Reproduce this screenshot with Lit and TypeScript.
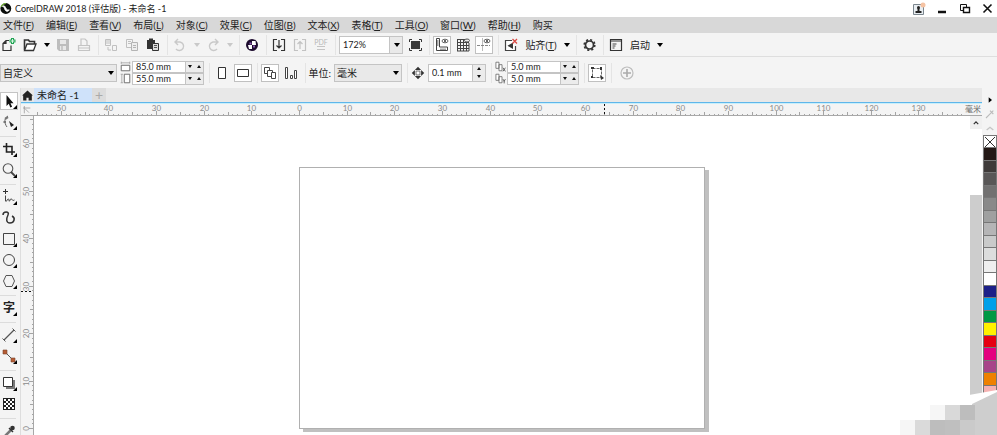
import { LitElement, html, svg, css, nothing } from "lit";
import { customElement, property } from "lit/decorators.js";

/* ---------- icons, drawn on an 18 x 18 grid ---------- */
const icons: Record<string, unknown> = {
  fresh: svg`<path d="M9 4.500H6L3 7.500v7h8v-5M6 4.500v3H3" fill="none" stroke="#333" stroke-width="1.2"/><path d="M12.500 2v6M9.500 5h6" stroke="#22a455" stroke-width="3"/><path d="M12.500 3v4M10.500 5h4" stroke="#d8f5e2" stroke-width="1"/>`,
  open: svg`<path d="M3.500 14V4h4l1 1.500h5V8" fill="none" stroke="#333" stroke-width="1.600"/><path d="M3.500 14.500 6 8h9l-2.500 6.500z" fill="#fff" stroke="#333" stroke-width="1.300"/>`,
  save: svg`<path d="M3 3h12v12H5l-2-2z" fill="#bdbdbd"/><path d="M6 4h6v4H6zM6 10h6v4H6z" fill="#e8e8e8"/><path d="M8 10v4" stroke="#aaa"/>`,
  print: svg`<path d="M6 9V3h4l2 2v4M3.500 14.500v-5h11v5zM3 12h12" fill="none" stroke="#c4c4c4" stroke-width="1.200"/>`,
  cut: svg`<path d="M3.500 3.500h5v6h-5zM4 5h4M4 7h4M10.500 9.500h4v5h-4zM6 11v3h3" fill="none" stroke="#c0c0c0"/>`,
  copy: svg`<path d="M3.500 3.500h6v8h-6zM5 5.500h3M5 7.500h3" fill="none" stroke="#c0c0c0"/><path d="M8.500 6.500h6v8h-6zM10 9.500h3M10 11.500h3" fill="#eee" stroke="#b4b4b4"/>`,
  paste: svg`<path d="M3 4h2V2.500h4V4h2v9H3z" fill="#333"/><path d="M8.500 7.500h6v7h-6z" fill="#ddd" stroke="#333"/><path d="M10 9.500h3M10 11.500h3" stroke="#555"/>`,
  undo: svg`<path d="M7 3 4 6l3 3M4 6h5a4.300 4.300 0 1 1-4 7" fill="none" stroke="#c9c9c9" stroke-width="1.400"/>`,
  redo: svg`<path d="M11 3l3 3-3 3M14 6H9a4.300 4.300 0 1 0 4 7" fill="none" stroke="#c9c9c9" stroke-width="1.400"/>`,
  connect: svg`<circle cx="9" cy="9" r="6" fill="#1d0b2e"/><path d="M9 5h3.500L13 9H9zM5 9h4v4H6z" fill="#fff"/><path d="M6.500 6.500h2v2h-2zM10 9.500h2v2h-2z" fill="#8a5cb0"/>`,
  load: svg`<path d="M7 3.500H3.500v11H7M11 3.500h3.500v11H11M9 4v8M6.500 9.500 9 12l2.500-2.500" fill="none" stroke="#333" stroke-width="1.200"/>`,
  send: svg`<path d="M7 3.500H3.500v11H7M11 3.500h3.500v11H11M9 13V5.500M6.500 8 9 5.500 11.500 8" fill="none" stroke="#c2c2c2" stroke-width="1.200"/>`,
  full: svg`<path d="M5 5h9v8H5z" fill="#3a3a3a"/><path d="M3.500 6V3.500H6M13 3.500h2.500V6M15.500 12v2.500H13M6 14.500H3.500V12" fill="none" stroke="#333"/>`,
  rulers: svg`<path d="M3.500 2.500h3v8.500h8v3.500h-11zM4 5h1.500M4 7h1.500M4 9h1.500M8 14v-1.500M10 14v-1.500M12 14v-1.500" fill="none" stroke="#444"/><ellipse cx="12" cy="5" rx="3" ry="1.800" fill="none" stroke="#666"/><circle cx="12" cy="5" r="1" fill="#333"/>`,
  grid: svg`<path d="M3.500 3v12M6.500 3v12M9.500 3v12M12.500 3v12M15 7v8M3 3.500h8M3 6.500h12M3 9.500h12M3 12.500h12M3 15h12" fill="none" stroke="#444"/><ellipse cx="13" cy="4.500" rx="2.500" ry="1.500" fill="#eee" stroke="#555"/>`,
  guides: svg`<path d="M7.500 2v13" stroke="#bbb"/><path d="M2 9.500h13" stroke="#888" stroke-dasharray="3 1"/><ellipse cx="12" cy="5" rx="3" ry="1.800" fill="none" stroke="#666"/><circle cx="12" cy="5" r="1" fill="#333"/>`,
  nosnap: svg`<path d="M10 4.500H3.500v10h10V10" fill="#fff" stroke="#444" stroke-width="1.200"/><path d="M11 6.500v6.500L5.500 9.700z" fill="#333"/><path d="M10.500 3l4.500 4.500M15 3l-4.500 4.500" stroke="#d94a44" stroke-width="1.300"/>`,
  gear: svg`<circle cx="9.500" cy="9" r="4" fill="none" stroke="#333" stroke-width="1.700"/><circle cx="9.500" cy="9" r="5.300" fill="none" stroke="#333" stroke-width="1.600" stroke-dasharray="2.080 2.080"/>`,
  launch: svg`<path d="M3.500 3.500h11v11h-11zM3.500 5h11" fill="none" stroke="#333" stroke-width="1.200"/><path d="M5.500 8h4M5.500 10h3M5.500 12h2" stroke="#444"/>`,
  portrait: svg`<path d="M5.500 3.500h7v11h-7z" fill="#fff" stroke="#333"/>`,
  landscape: svg`<path d="M3.500 5.500h11v7h-11z" fill="#fff" stroke="#333"/>`,
  pages: svg`<path d="M3.500 3.500h5v6h-5z" fill="#fff" stroke="#444"/><path d="M6.500 6.500h5v6h-5z" fill="#fff" stroke="#444"/><path d="M10.500 8.500h4v6h-4z" fill="#fff" stroke="#444"/>`,
  current: svg`<path d="M3.500 3.500h2v11h-2zM12.500 6.500h2v8h-2zM8.500 11.500h2v3h-2z" fill="#fff" stroke="#444"/>`,
  nudge: svg`<path d="M9 1l4 4H5zM9 17l4-4H5zM1 9l4-4v8zM17 9l-4-4v8z" fill="#333"/><path d="M6.500 6.500h5v5h-5z" fill="#fff" stroke="#555"/>`,
  bounds: svg`<path d="M4.500 4.500h9v9h-9z" fill="none" stroke="#666" stroke-dasharray="3 1"/><path d="M3 3h3v2H3zM12 3h2v3h-2zM3 12h2v2H3z" fill="#333"/><path d="M12 11l4 3-3 2z" fill="#333"/>`,
  plus: svg`<circle cx="9" cy="9" r="6" fill="none" stroke="#bdbdbd" stroke-width="1.200"/><path d="M9 5v8M5 9h8" stroke="#aaa" stroke-width="1.600"/>`,
  pick: svg`<path d="M6.500 3v11l2.300-2.200 1.500 3.700 1.800-.8-1.600-3.500h3z" fill="#111"/>`,
  shape: svg`<path d="M8 3C4 5 4 10 7 14" fill="none" stroke="#666"/><path d="M4.500 5l3-2 1 2-3 2zM3.500 8h2.500v2H3.500z" fill="#777"/><path d="M9 8l5 4-3 2z" fill="#222"/>`,
  crop: svg`<path d="M6.500 3v9H15M3 6.500h9V15" fill="none" stroke="#222" stroke-width="1.600"/>`,
  zoom: svg`<circle cx="8" cy="7.500" r="4.800" fill="none" stroke="#555" stroke-width="1.100"/><path d="M11 11l4 4" stroke="#444" stroke-width="1.800"/>`,
  freehand: svg`<path d="M5.500 1v5M3 3.500h5" stroke="#333"/><path d="M5.500 7.500V13c1 2 2-3 3-2s0 3 1 2 1-3 2-2 1 2 3 1" fill="none" stroke="#444"/>`,
  artistic: svg`<path d="M3 6c0-4 7-4 5 0s-2 8 2 8 6-5 2-7" fill="none" stroke="#333" stroke-width="1.500"/>`,
  rect: svg`<path d="M3.500 3.500h11v11h-11z" fill="none" stroke="#444"/>`,
  ellipse: svg`<circle cx="9" cy="9" r="5.500" fill="none" stroke="#444"/>`,
  polygon: svg`<path d="M6 3.500h6L14.500 9 12 14.500H6L3.500 9z" fill="none" stroke="#555"/>`,
  line: svg`<path d="M4 14L14 4" stroke="#555" stroke-width="1.200"/><path d="M2.500 12.500l3 3M12.500 2.500l3 3" stroke="#555"/>`,
  connector: svg`<path d="M5 5l9 9" stroke="#555"/><path d="M3 3h4v4H3zM11 11h4v4h-4z" fill="#b55c34" stroke="#7a452c" stroke-width=".6"/>`,
  shadow: svg`<path d="M6 6h9v9H6z" fill="#777"/><path d="M3.500 3.500h9v9h-9z" fill="#fff" stroke="#333"/>`,
  checker: svg`<path d="M3 3h12v12H3z" fill="#222"/>${[0, 1, 2, 3, 4].map((r) =>
    [0, 1, 2].map((c) => (r % 2 && c === 2) ? nothing : svg`<path d=${`M${4 + c * 4 + (r % 2) * 2} ${4 + r * 2}h2v2h-2z`} fill="#fff"/>`))}`,
  dropper: svg`<path d="M4 15l7-7" stroke="#777" stroke-width="2.500"/><path d="M9 6l4 4" stroke="#333" stroke-width="1.500"/><circle cx="12.500" cy="6" r="2.300" fill="#333"/>`,
  user: svg`<path d="M3.500 4.500h10v10h-10z" fill="#e9eef2" stroke="#7b868e"/><circle cx="8.500" cy="7.500" r="1.500" fill="#222"/><path d="M7.500 8h2v3h2v2h-6v-2h2z" fill="#222"/><circle cx="13" cy="5" r="2.500" fill="#f5c3a3"/>`,
  minimize: svg`<path d="M5 12h8" stroke="#111" stroke-width="2.500"/>`,
  restore: svg`<path d="M4.500 4.500h6v6h-6z" fill="none" stroke="#111"/><path d="M7.500 7.500h6v5h-6z" fill="#fff" stroke="#111" stroke-width="1.400"/>`,
  close: svg`<path d="M4.500 4.500l8 8M12.500 4.500l-8 8" stroke="#111" stroke-width="1.600"/>`,
  logo: svg`<circle cx="7" cy="9" r="6.500" fill="#0c0f0c"/><path d="M1.500 7A6.500 6.500 0 0 1 7 3" stroke="#7ec242" stroke-width="1.500" fill="none"/><path d="M3 6.500c2-2 3 0 4 2s2 3 4 2c-1 3-4 2-5 0s-1-4-3-4z" fill="#fff" stroke="#fff"/>`,
  home: svg`<path d="M9 2L1.500 9H3v7h4.500v-4h3v4H15V9h1.500z" fill="#222"/>`,
  origin: svg`<path d="M5 3v11M3 6h11M6 7l6 6" stroke="#8c8c8c" fill="none"/>`,
  wide: svg`<path d="M2 1v4M16 1v4M2 3h14" stroke="#888" fill="none"/><path d="M2 7h14v9H2z" fill="#fff" stroke="#666" stroke-width="1.500"/>`,
  tall: svg`<path d="M1 2h4M1 16h4M3 2v14" stroke="#888" fill="none"/><path d="M7 2h9v14H7z" fill="#fff" stroke="#666" stroke-width="1.500"/>`,
  dup: svg`<path d="M1.500 2h5v10h-5zM6.500 6h5v10h-5z" fill="#fff" stroke="#666" stroke-width="1.300"/>`,
  dupx: svg`<path d="M13 11l4 6M17 11l-4 6" stroke="#444" stroke-width="1.300"/>`,
  dupy: svg`<path d="M13 10l2 3.500 2-3.500M15 13v4" fill="none" stroke="#444" stroke-width="1.300"/>`,
  up: svg`<path d="M5 11l4-4 4 4" fill="none" stroke="#333" stroke-width="2.200"/>`,
  flyout: svg`<path d="M7 5v8l5-4z" fill="#000"/>`,
  pen: svg`<path d="M3 15l8-8M9 4l5 5M11 7l3-3" stroke="#bbb" stroke-width="1.600"/>`,
  faint: svg`<path d="M4 12l5-4 5 4" fill="none" stroke="#c4c4c4" stroke-width="2"/>`,
};

const icon = (name: string, size = 18, second = "") =>
  html`<svg width=${size} height=${size} viewBox="0 0 18 18" aria-hidden="true">${icons[name]}${second ? icons[second] : nothing}</svg>`;

const base = css`
  * { box-sizing: border-box; }
  svg { display: block; flex: none; }
  button {
    font: inherit; color: inherit; background: none; border: 0; padding: 0; margin: 0;
    display: flex; align-items: center; justify-content: center; flex: none;
  }
`;

const bar = css`
  :host { display: flex; align-items: center; gap: 3px; white-space: nowrap; }
  .tool { width: 18px; height: 18px; }
  .on { background: #fff; box-shadow: inset 0 0 0 1px #c0c0c0; }
  .sep { width: 3px; height: 20px; flex: none; border-right: 1px solid #e4e4e4; }
  .drop { width: 9px; height: 18px; }
  .drop::before, .arrow {
    content: ""; border: 3px solid transparent; border-top: 4px solid #000; border-bottom: 0;
  }
  .faint::before { border-top-color: #c9c9c9; }
  .combo { display: grid; align-items: center; flex: none; }
  .combo > * { grid-area: 1 / 1; }
  .combo .arrow { justify-self: end; margin-right: 3px; pointer-events: none; }
  select, input {
    font: inherit; color: #222; min-width: 0; border: 1px solid #c4c4c4; border-radius: 0;
    background: #fff; padding: 0 3px; margin: 0; outline: 0; appearance: none;
  }
  input { font-size: 9px; }
  select { width: 100%; height: 18px; background: #e9e9e9; padding: 0 2px; }
  .text { height: 18px; color: #222; }
`;

@customElement("standard-bar")
class StandardBar extends LitElement {
  static styles = [base, bar, css`
    .zoom { width: 64px; }
    .zoom select { background: linear-gradient(to left, #e9e9e9 12px, #c4c4c4 12px 13px, #fff 13px); padding: 0 3px; font-size: 9px; }
    .snap { width: 36px; }
    .launch { width: 24px; }
    .pdf { font-size: 7px; color: #b8b8b8; flex-direction: column; line-height: 7px; }
    .lines { width: 8px; height: 4px; border: solid #c4c4c4; border-width: 1px 0; }
  `];
  private b(name: string, label: string, on = false) {
    return html`<button class="tool ${on ? "on" : ""}" aria-label=${label}>${icon(name)}</button>`;
  }
  private sep = () => html`<span class="sep"></span>`;
  private drop = (faint = false) => html`<button class="drop ${faint ? "faint" : ""}" aria-label="更多"></button>`;
  render() {
    return html`
      ${this.b("fresh", "新建")}${this.b("open", "打开")}${this.drop()}${this.b("save", "保存")}${this.b("print", "打印")}
      ${this.sep()}${this.b("cut", "剪切")}${this.b("copy", "复制")}${this.b("paste", "粘贴")}
      ${this.sep()}${this.b("undo", "撤消")}${this.drop(true)}${this.b("redo", "重做")}${this.drop(true)}
      ${this.sep()}${this.b("connect", "搜索内容")}
      ${this.sep()}${this.b("load", "导入")}${this.b("send", "导出")}
      <button class="tool pdf" aria-label="发布为 PDF">PDF<span class="lines"></span></button>
      ${this.sep()}
      <span class="combo zoom"><select aria-label="缩放级别"><option>172%</option></select><span class="arrow"></span></span>
      ${this.b("full", "全屏预览")}
      ${this.sep()}${this.b("rulers", "显示标尺", true)}${this.b("grid", "显示网格")}${this.b("guides", "显示辅助线", true)}
      ${this.sep()}${this.b("nosnap", "关闭贴齐")}<button class="text snap">贴齐(<u>T</u>)</button>${this.drop()}
      ${this.sep()}${this.b("gear", "选项")}
      ${this.sep()}${this.b("launch", "应用程序启动器")}<button class="text launch">启动</button>${this.drop()}`;
  }
}

@customElement("property-bar")
class PropertyBar extends LitElement {
  static styles = [base, bar, css`
    .preset { width: 117px; }
    .units { width: 68px; }
    .label { width: 22px; display: flex; justify-content: flex-end; }
    .pair { display: grid; grid-template-columns: 12px 72px; width: 84px; align-items: center; flex: none; }
    .field { display: flex; height: 12px; }
    .field input { flex: 1; height: 12px; line-height: 10px; }
    .spin { display: flex; width: 18px; align-items: center; justify-content: space-around; background: #ececec; border: 1px solid #c4c4c4; border-left: 0; }
    .down, .upper { width: 5px; height: 5px; }
    .down::before, .upper::before { content: ""; border: 2px solid transparent; border-top: 3px solid #111; border-bottom: 0; }
    .upper::before { border-top: 0; border-bottom: 3px solid #111; }
    .nudge { width: 58px; height: 18px; }
    .nudge input { height: 18px; }
    .nudge .spin { width: 13px; flex-direction: column-reverse; }
    .add { width: 24px; }
  `];
  private b(name: string, label: string, on = false) {
    return html`<button class="tool ${on ? "on" : ""}" aria-label=${label}>${icon(name)}</button>`;
  }
  private sep = () => html`<span class="sep"></span>`;
  private field(label: string, value: string, extra = "") {
    return html`<span class="field ${extra}"><input aria-label=${label} .value=${value}>
      <span class="spin"><button class="down" aria-label="减少"></button><button class="upper" aria-label="增加"></button></span></span>`;
  }
  render() {
    return html`
      <span class="combo preset"><select aria-label="页面大小"><option>自定义</option></select><span class="arrow"></span></span>
      <span class="pair">
        ${icon("wide", 11)}${this.field("页面宽度", "85.0 mm")}
        ${icon("tall", 11)}${this.field("页面高度", "55.0 mm")}
      </span>
      ${this.sep()}${this.b("portrait", "纵向")}${this.b("landscape", "横向", true)}
      ${this.sep()}${this.b("pages", "所有页面", true)}${this.b("current", "当前页面")}
      ${this.sep()}<label class="label" for="units">单位:</label>
      <span class="combo units"><select id="units"><option>毫米</option></select><span class="arrow"></span></span>
      ${this.sep()}${icon("nudge", 14)}${this.field("微调距离", "0.1 mm", "nudge")}
      ${this.sep()}
      <span class="pair">
        ${icon("dup", 11, "dupx")}${this.field("再制距离 X", "5.0 mm")}
        ${icon("dup", 11, "dupy")}${this.field("再制距离 Y", "5.0 mm")}
      </span>
      ${this.sep()}${this.b("bounds", "将对象视为已填充", true)}
      ${this.sep()}<button class="add" aria-label="自定义">${icon("plus")}</button>`;
  }
}

@customElement("tool-box")
class ToolBox extends LitElement {
  static styles = [base, css`
    :host { display: flex; flex-direction: column; gap: 3px; padding-top: 4px; overflow: hidden; }
    button { width: 18px; height: 18px; position: relative; }
    .on { background: #fff; box-shadow: inset 0 0 0 1px #c4c4c4; }
    .more::after {
      content: ""; position: absolute; right: 1px; bottom: 1px;
      border: 2px solid transparent; border-right-color: #000; border-bottom-color: #000;
    }
    .sep { height: 3px; width: 16px; flex: none; border-bottom: 1px solid #dcdcdc; }
    .glyph { font-size: 12px; font-weight: 700; }
  `];
  private tools: [string, string][] = [
    ["pick", "选择"], ["shape", "形状"], ["", ""], ["crop", "裁剪"], ["zoom", "缩放"], ["", ""],
    ["freehand", "手绘"], ["artistic", "艺术笔"], ["rect", "矩形"], ["ellipse", "椭圆形"], ["polygon", "多边形"], ["", ""],
    ["text", "文本"], ["", ""], ["line", "平行度量"], ["connector", "直线连接器"], ["", ""],
    ["shadow", "阴影"], ["checker", "透明度"], ["", ""], ["dropper", "颜色滴管"],
  ];
  render() {
    return this.tools.map(([name, label], i) => !name
      ? html`<span class="sep"></span>`
      : html`<button class="${i === 0 ? "on" : ""} ${["artistic", "checker"].includes(name) ? "" : "more"}" aria-label=${label}>
          ${name === "text" ? html`<span class="glyph">字</span>` : icon(name)}</button>`);
  }
}

/* A ruler strip: \`origin\` is where zero falls, \`step\` the pixels per ten units. */
@customElement("ruler-strip")
class RulerStrip extends LitElement {
  @property({ type: Boolean }) vertical = false;
  @property({ type: Number }) origin = 0;
  @property({ type: Number }) step = 47;
  @property({ type: Number }) from = 0;
  @property({ type: Number }) to = 100;
  @property({ type: Number }) cursor = 0;
  static styles = css`
    :host { display: block; overflow: hidden; min-width: 0; min-height: 0; }
    svg { display: block; width: 100%; height: 100%; }
    text { font-size: 8px; fill: #8a8a8a; text-anchor: middle; }
  `;
  render() {
    const marks = [];
    for (let n = this.from; n <= this.to; n++) {
      const at = Math.round(this.origin + (this.vertical ? -n : n) * this.step / 10) + 0.5;
      const len = n % 10 === 0 ? 4 : n % 5 === 0 ? 3 : 1;
      marks.push(this.vertical
        ? svg`<path d=${`M${12 - len} ${at}h${len}`} stroke="#a4a4a4"/>`
        : svg`<path d=${`M${at} ${11 - len}v${len}`} stroke="#a4a4a4"/>`);
      if (n % 10 === 0) marks.push(this.vertical
        ? svg`<text transform=${`translate(8 ${at}) rotate(-90)`}>${Math.abs(n)}</text>`
        : svg`<text x=${at} y="7">${Math.abs(n)}</text>`);
    }
    const c = this.cursor + 0.5;
    return html`<svg aria-hidden="true">${marks}
      <path d=${this.vertical ? `M0 ${c}h13` : `M${c} 0v12`} stroke="#111" stroke-dasharray="2 2"/></svg>`;
  }
}

@customElement("color-palette")
class ColorPalette extends LitElement {
  static styles = [base, css`
    :host { display: flex; flex-direction: column; align-items: center; overflow: hidden; padding-top: 5px; }
    .small { width: 12px; height: 14px; }
    .swatches { border: 1px solid #777; width: 14px; }
    .swatches button { width: 12px; height: 12px; border-bottom: 1px solid #777; }
    .swatches button:nth-child(even) { height: 13px; }
  `];
  private colors = ["#fff", "#231815", "#3e3a39", "#595757", "#727171", "#898989", "#9fa0a0", "#b5b5b6", "#c9caca",
    "#dcdddd", "#efefef", "#ffffff", "#1d2088", "#00a0e9", "#009944", "#fff100", "#e60012", "#e4007f", "#a84489",
    "#ee8100", "#f5b2b2", "#f5b2b2"];
  render() {
    return html`
      <button class="small" aria-label="调色板菜单">${icon("flyout", 12)}</button>
      <button class="small" aria-label="颜色滴管">${icon("pen", 12)}</button>
      <button class="small" aria-label="向上">${icon("faint", 12)}</button>
      <div class="swatches">${this.colors.map((c, i) => html`
        <button style="background:${c}" aria-label=${c}>${i ? nothing : html`<svg width="12" height="12"><path d="M1 1l10 10M11 1L1 11" stroke="#333"/></svg>`}</button>`)}
      </div>`;
  }
}

@customElement("app-root")
class AppRoot extends LitElement {
  static styles = [base, css`
    :host {
      display: flex; flex-direction: column; height: 100vh; overflow: hidden; position: relative;
      background: #f4f4f4; color: #222;
      font: 10px/14px Lato, "Noto Sans CJK SC", sans-serif;
    }
    .title { display: flex; align-items: center; height: 17px; background: #fff; flex: none; }
    .title h1 { font: inherit; font-size: 9px; margin: 0; flex: 1; white-space: nowrap; }
    .window { display: flex; gap: 5px; }
    nav { display: flex; gap: 12px; height: 16px; padding-left: 3px; background: #d8d8d8; flex: none; align-items: center; }
    nav a { color: inherit; text-decoration: none; white-space: nowrap; }
    standard-bar { height: 24px; border-bottom: 1px solid #dedede; flex: none; }
    property-bar { height: 31px; flex: none; }
    .work { flex: 1; min-height: 0; display: grid; grid-template-columns: 20px minmax(0, 1fr) 15px; }
    .doc { display: grid; grid-template-rows: 14px 2px 11px minmax(0, 1fr); min-height: 0; border-left: 1px solid #ddd; }
    .tabs { display: flex; background: #e8e8e8; }
    .home { width: 13px; }
    .tab { background: #cfe2fa; width: 58px; padding: 0 3px; justify-content: flex-start; }
    .new { width: 14px; color: #aaa; background: #dcdcdc; font-size: 14px; }
    .accent { background: linear-gradient(#5fb6ea 1px, #c8effb 1px); }
    .top { display: grid; grid-template-columns: 12px minmax(0, 1fr) 18px; }
    .unit { font-size: 8px; line-height: 10px; color: #666; text-align: center; }
    .body { display: grid; grid-template-columns: 13px minmax(0, 1fr) 12px; min-height: 0; border-top: 1px solid #a8a8a8; }
    .side { border-right: 1px solid #a8a8a8; }
    .canvas { position: relative; background: #fff; overflow: hidden; }
    .page {
      position: absolute; left: 265px; top: 51px; width: 406px; height: 262px;
      background: #fff; border: 1px solid #b0b0b0; box-shadow: 4px 3px 0 #c0c0c0;
    }
    .scroll { display: flex; flex-direction: column; background: #fff; }
    .step { width: 12px; height: 13px; background: #f0f0f0; }
    .thumb { flex: 1; margin-top: 66px; background: #cdcdcd; }
    .corner { position: absolute; right: 0; bottom: 0; }
  `];
  private menus = [["文件", "F"], ["编辑", "E"], ["查看", "V"], ["布局", "L"], ["对象", "C"], ["效果", "C"], ["位图", "B"],
    ["文本", "X"], ["表格", "T"], ["工具", "O"], ["窗口", "W"], ["帮助", "H"], ["购买", ""]];
  render() {
    const blocks: [number, number, string][] = [
      [30, 15, "#f6f6f6"], [45, 15, "#d9d9d9"], [60, 15, "#bdbdbd"], [75, 15, "#cecece"], [90, 15, "#cecece"],
      [0, 30, "#f6f6f6"], [15, 30, "#dadada"], [30, 30, "#bdbdbd"], [45, 30, "#bfbfbf"], [60, 30, "#cacaca"], [75, 30, "#cecece"], [90, 30, "#cecece"],
    ];
    return html`
      <header class="title">
        ${icon("logo", 15)}<h1>CorelDRAW 2018 (评估版) - 未命名 -1</h1>
        <div class="window">
          <button aria-label="登录">${icon("user")}</button><button aria-label="最小化">${icon("minimize")}</button>
          <button aria-label="还原">${icon("restore")}</button><button aria-label="关闭">${icon("close")}</button>
        </div>
      </header>
      <nav>${this.menus.map(([t, k]) => html`<a href="#">${t}${k ? html`(<u>${k}</u>)` : nothing}</a>`)}</nav>
      <standard-bar></standard-bar>
      <property-bar></property-bar>
      <main class="work">
        <tool-box></tool-box>
        <section class="doc">
          <div class="tabs">
            <button class="home" aria-label="欢迎屏幕">${icon("home", 13)}</button>
            <button class="tab">未命名 -1</button>
            <button class="new" aria-label="新建文档">+</button>
          </div>
          <div class="accent"></div>
          <div class="top">
            ${icon("origin", 12)}
            <ruler-strip .origin=${266} .step=${47.65} .from=${-55} .to=${139} .cursor=${571}></ruler-strip>
            <span class="unit">毫米</span>
          </div>
          <div class="body">
            <ruler-strip class="side" vertical .origin=${312} .step=${47.5} .from=${0} .to=${65} .cursor=${175}></ruler-strip>
            <div class="canvas"><div class="page"></div></div>
            <div class="scroll"><button class="step" aria-label="向上滚动">${icon("up", 10)}</button><div class="thumb"></div></div>
          </div>
        </section>
        <color-palette></color-palette>
      </main>
      <svg class="corner" width="97" height="45" aria-hidden="true">
        <path d="M69 5L97 0V45H69z" fill="#fff"/>
        <path d="M72 14L97 2V45H72z" fill="#cecece"/>
        ${blocks.map(([x, y, c]) => svg`<path d=${`M${x} ${y}h15v15h-15z`} fill=${c}/>`)}
      </svg>`;
  }
}
